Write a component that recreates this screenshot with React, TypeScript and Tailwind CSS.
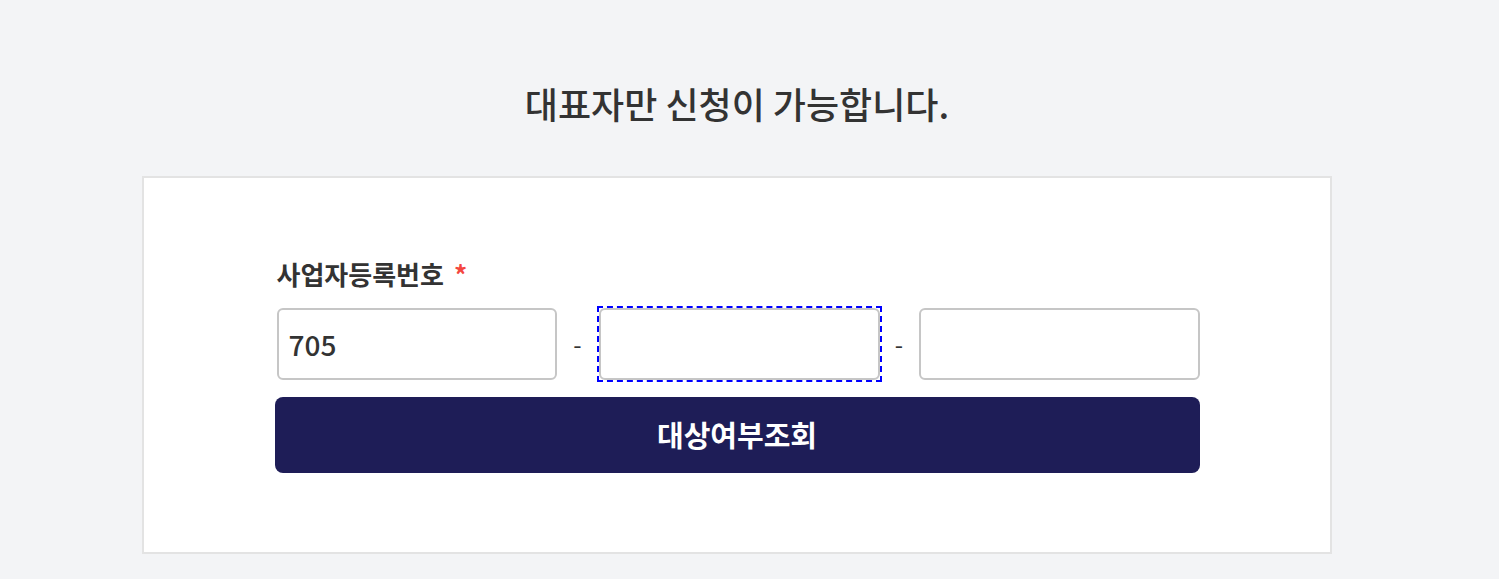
import { useState } from 'react'

const font = { fontFamily: '"Noto Sans CJK KR", "Noto Sans", sans-serif' }

export default function App() {
  const [first, setFirst] = useState('705')
  const [second, setSecond] = useState('')
  const [third, setThird] = useState('')

  return (
    <div className="min-h-[579px] bg-[#f3f4f6]" style={font}>
      <div className="w-[1474px] pt-[82px] pb-[25px]">
        <h1 className="text-center text-[36px] leading-[42px] font-medium text-[#333]">
          대표자만 신청이 가능합니다.
        </h1>

        <div className="mx-auto mt-[52px] w-[1190px] border-2 border-[#e3e3e3] bg-white pt-[80px] pb-[79px]">
          <div className="mx-auto w-[925px]">
            <div className="flex items-center pl-[2px] text-[26px] leading-[32px] font-bold text-[#333]">
              사업자등록번호
              <span className="ml-[10px] text-[#f4473f]">*</span>
            </div>

            <div className="mt-[18px] flex items-center">
              <input
                className="ml-[2px] h-[72px] w-[280px] rounded-[6px] border-2 border-[#c6c6c6] bg-white px-[10px] text-[28px] font-medium text-[#333] outline-none"
                value={first}
                onChange={(e) => setFirst(e.target.value)}
                maxLength={3}
              />
              <div className="flex w-[42px] justify-center text-[24px] text-[#333]">-</div>
              {/* focus ring drawn square, like the browser's default */}
              <div className="flex outline-2 outline-dashed outline-[#0000ff]">
                <input
                  className="h-[72px] w-[281px] rounded-[6px] border-2 border-[#c6c6c6] bg-white px-[10px] text-[28px] font-medium text-[#333] outline-none"
                  value={second}
                  onChange={(e) => setSecond(e.target.value)}
                  maxLength={2}
                />
              </div>
              <div className="flex w-[39px] justify-center text-[24px] text-[#333]">-</div>
              <input
                className="h-[72px] w-[281px] rounded-[6px] border-2 border-[#c6c6c6] bg-white px-[10px] text-[28px] font-medium text-[#333] outline-none"
                value={third}
                onChange={(e) => setThird(e.target.value)}
                maxLength={5}
              />
            </div>

            <button
              type="button"
              className="mt-[17px] flex h-[76px] w-[925px] items-center justify-center rounded-[8px] bg-[#1e1d57] text-[29px] font-bold text-white"
            >
              대상여부조회
            </button>
          </div>
        </div>
      </div>
    </div>
  )
}
